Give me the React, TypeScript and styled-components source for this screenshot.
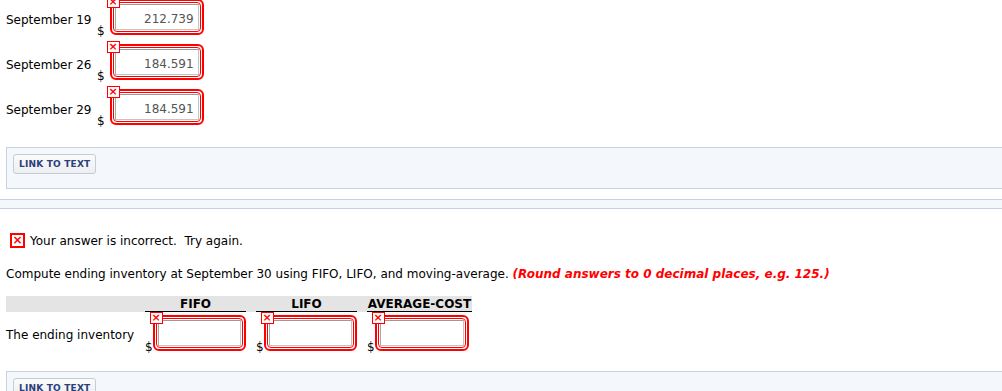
import styled, { createGlobalStyle } from "styled-components";

const GlobalStyle = createGlobalStyle`
  html, body {
    margin: 0;
    padding: 0;
    background: #fff;
    overflow: hidden;
  }
  body {
    font-family: "DejaVu Sans", Verdana, sans-serif;
    font-size: 12px;
    line-height: 14px;
    color: #000;
  }
`;

const Page = styled.div`
  width: 1002px;
  height: 391px;
  overflow: hidden;
`;

const Spacer = styled.div<{ $h: number }>`
  height: ${({ $h }) => $h}px;
`;

const RowsBlock = styled.div`
  display: flex;
  flex-direction: column;
  gap: 9px;
  margin-top: -1px;
  padding-left: 6px;
`;

const Row = styled.div`
  display: flex;
  align-items: center;
`;

const RowLabel = styled.div<{ $w?: number }>`
  width: ${({ $w }) => ($w ? `${$w}px` : "auto")};
  padding-top: 6px;
  white-space: nowrap;
`;

const Dollar = styled.span`
  align-self: flex-end;
  line-height: 12px;
  margin-bottom: -2px;
`;

const Field = styled.div<{ $gap: number }>`
  position: relative;
  margin-left: ${({ $gap }) => $gap}px;
  width: 94px;
  height: 36px;
  box-sizing: border-box;
  border: 2px solid #f00;
  border-radius: 6px;
  padding: 1px;
`;

const FieldInner = styled.div`
  height: 100%;
  box-sizing: border-box;
  border: 1px solid #f00;
  border-radius: 4px;
  padding: 1px;
`;

const Input = styled.div`
  height: 100%;
  box-sizing: border-box;
  border: 1px solid #c4c4c4;
  border-top-color: #9a9a9a;
  border-left-color: #a8a8a8;
  background: #fff;
  color: #555;
  text-align: right;
  padding: 7px 4px 0 0;
  font-size: 12px;
`;

const Badge = styled.div`
  position: absolute;
  left: -5px;
  top: -5px;
  width: 13px;
  height: 12px;
  box-sizing: border-box;
  border: 1px solid #f00;
  background: #fff;
  color: #f00;
  font-weight: bold;
  font-size: 11px;
  line-height: 10px;
  text-align: center;
`;

const Panel = styled.div`
  margin-left: 6px;
  border: 1px solid #c8d2de;
  border-right: none;
  background: #f4f7fb;
  padding: 6px;
  height: 28px;
`;

const LinkButton = styled.button`
  font-family: "DejaVu Sans", Verdana, sans-serif;
  font-weight: bold;
  font-size: 9px;
  color: #2b3f7a;
  background: linear-gradient(#fbfbfb, #eceef1);
  border: 1px solid #c5ccd5;
  border-radius: 3px;
  height: 20px;
  padding: 0 5px;
  letter-spacing: 0.2px;
`;

const Band = styled.div`
  height: 8px;
  border-top: 1px solid #c8d2de;
  border-bottom: 1px solid #c8d2de;
  background: #f4f7fb;
`;

const Section = styled.div`
  padding: 0 6px;
`;

const Verdict = styled.div`
  display: flex;
  align-items: center;
  gap: 5px;
  padding-left: 4px;
`;

const XIcon = styled.span`
  width: 15px;
  height: 15px;
  box-sizing: border-box;
  border: 2px solid #f00;
  color: #f00;
  font-weight: bold;
  font-size: 12px;
  line-height: 11px;
  text-align: center;
`;

const Prompt = styled.p`
  margin: 0;
  white-space: nowrap;
`;

const Hint = styled.span`
  color: #f00;
  font-weight: bold;
  font-style: italic;
`;

const Table = styled.div`
  display: grid;
  grid-template-columns: 129px 101px 101px 105px;
  column-gap: 10px;
  width: 466px;
`;

const HeadCell = styled.div<{ $blank?: boolean }>`
  background: #e4e4e4;
  height: 15px;
  font-weight: bold;
  text-align: center;
  line-height: 16px;
  white-space: nowrap;
  border-bottom: 1px solid ${({ $blank }) => ($blank ? "#e4e4e4" : "#000")};
  box-shadow: 10px 0 0 #e4e4e4;
  &:nth-child(4) {
    box-shadow: none;
  }
`;

const BodyCell = styled.div<{ $label?: boolean }>`
  display: flex;
  align-items: center;
  padding-top: ${({ $label }) => ($label ? 7 : 3)}px;
  white-space: nowrap;
`;

const rows = [
  { label: "September 19", value: "212.739" },
  { label: "September 26", value: "184.591" },
  { label: "September 29", value: "184.591" },
];

function AnswerField({ value, gap }: { value?: string; gap: number }) {
  return (
    <Field $gap={gap}>
      <Badge>×</Badge>
      <FieldInner>
        <Input>{value}</Input>
      </FieldInner>
    </Field>
  );
}

export default function App() {
  return (
    <Page>
      <GlobalStyle />
      <RowsBlock>
        {rows.map((r) => (
          <Row key={r.label}>
            <RowLabel $w={91}>{r.label}</RowLabel>
            <Dollar>$</Dollar>
            <AnswerField value={r.value} gap={5} />
          </Row>
        ))}
      </RowsBlock>
      <Spacer $h={22} />
      <Panel>
        <LinkButton>LINK TO TEXT</LinkButton>
      </Panel>
      <Spacer $h={10} />
      <Band />
      <Section>
        <Spacer $h={24} />
        <Verdict>
          <XIcon>×</XIcon>
          <span style={{ paddingTop: 1 }}>Your answer is incorrect.&nbsp; Try again.</span>
        </Verdict>
        <Spacer $h={19} />
        <Prompt>
          Compute ending inventory at September 30 using FIFO, LIFO, and
          moving-average. <Hint>(Round answers to 0 decimal places, e.g. 125.)</Hint>
        </Prompt>
        <Spacer $h={15} />
        <Table>
          <HeadCell $blank />
          <HeadCell>FIFO</HeadCell>
          <HeadCell>LIFO</HeadCell>
          <HeadCell>AVERAGE-COST</HeadCell>
          <BodyCell $label>The ending inventory</BodyCell>
          {["fifo", "lifo", "avg"].map((k) => (
            <BodyCell key={k}>
              <Dollar>$</Dollar>
              <AnswerField gap={0} />
            </BodyCell>
          ))}
        </Table>
      </Section>
      <Spacer $h={20} />
      <Panel>
        <LinkButton>LINK TO TEXT</LinkButton>
      </Panel>
    </Page>
  );
}
